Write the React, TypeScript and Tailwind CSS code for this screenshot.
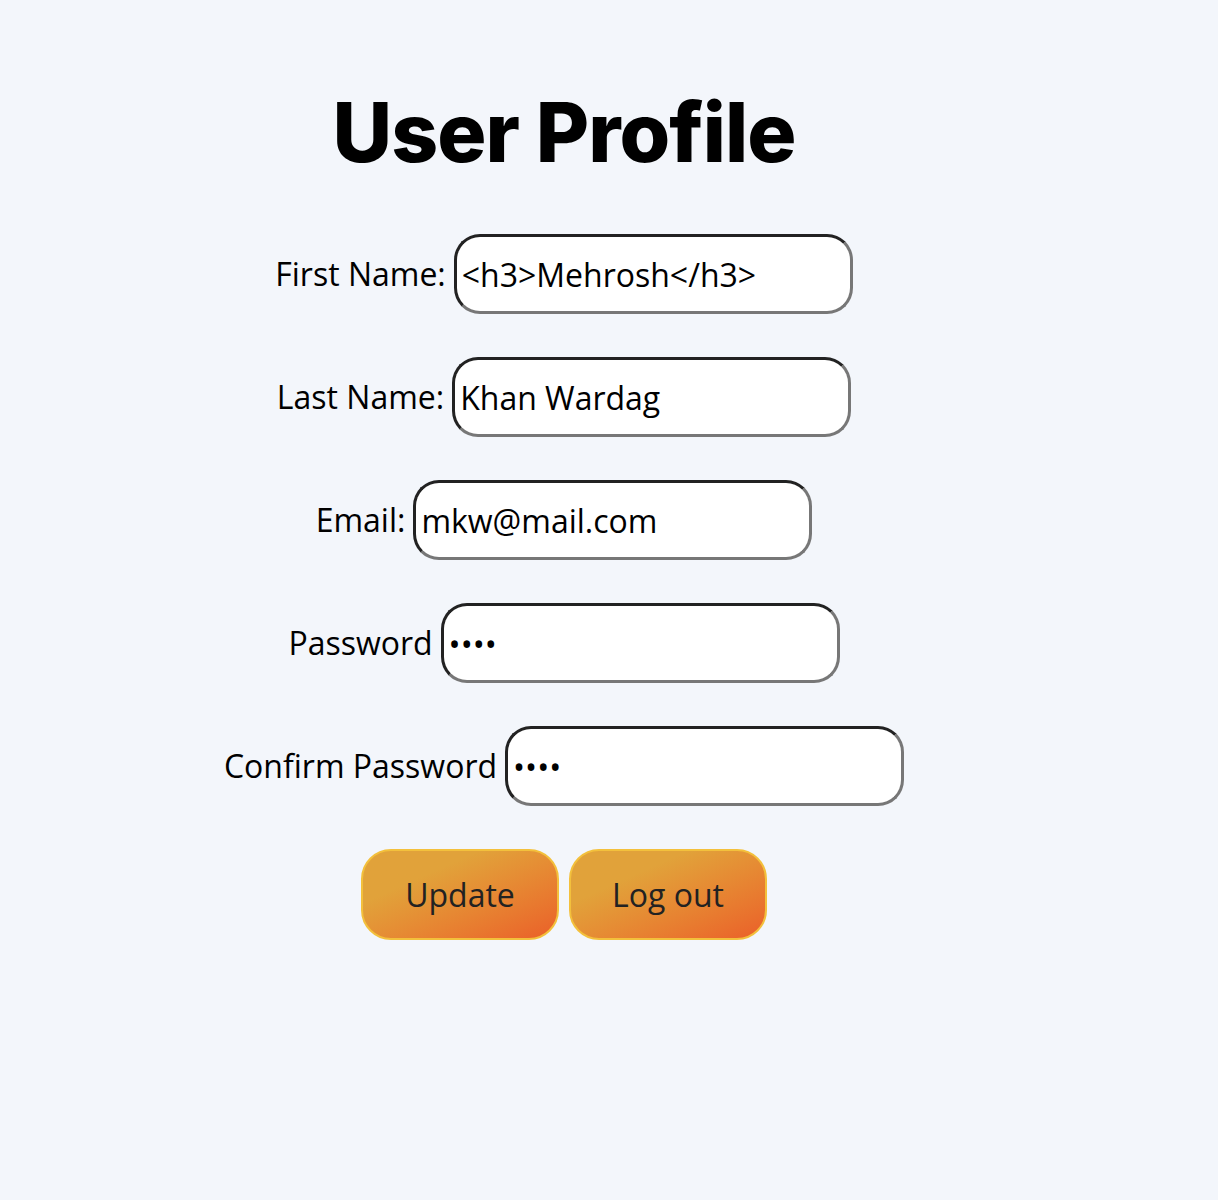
import React from 'react';

const fields = [
  { label: 'First Name:', value: '<h3>Mehrosh</h3>', type: 'text' },
  { label: 'Last Name:', value: 'Khan Wardag', type: 'text' },
  { label: 'Email:', value: 'mkw@mail.com', type: 'text' },
  { label: 'Password', value: '1234', type: 'password' },
  { label: 'Confirm Password', value: '1234', type: 'password' },
];

const App: React.FC = () => {
  return (
    <div className="min-h-[1200px] bg-[#f3f6fb] font-['Open_Sans',sans-serif]">
      <div className="w-[1128px] flex flex-col items-center pt-[78px]">
        {/* Title */}
        <h1 className="font-['Inter',sans-serif] font-extrabold text-[82px] leading-[110px] tracking-[-1px] text-black">
          User Profile
        </h1>

        {/* Form rows */}
        <div className="flex flex-col items-center gap-[43px] mt-[46px]">
          {fields.map(f => (
            <div key={f.label} className="flex items-center gap-[8px]">
              <label className="text-[32px] text-black">{f.label}</label>
              <input
                type={f.type}
                defaultValue={f.value}
                readOnly
                className="w-[399px] h-[80px] rounded-[26px] border-[3px] border-t-[#222] border-l-[#222] border-b-[#777] border-r-[#777] bg-white px-[5px] text-[32px] text-black outline-none font-['Open_Sans',sans-serif]"
              />
            </div>
          ))}
        </div>

        {/* Buttons */}
        <div className="flex gap-[10px] mt-[43px]">
          <button className="w-[198px] h-[91px] rounded-[30px] border-2 border-[#f3c03c] bg-linear-to-br from-[#e1a23a] from-30% to-[#ea5f29] text-[32px] text-[#222]">
            Update
          </button>
          <button className="w-[198px] h-[91px] rounded-[30px] border-2 border-[#f3c03c] bg-linear-to-br from-[#e1a23a] from-30% to-[#ea5f29] text-[32px] text-[#222]">
            Log out
          </button>
        </div>
      </div>
    </div>
  );
};

export default App;
